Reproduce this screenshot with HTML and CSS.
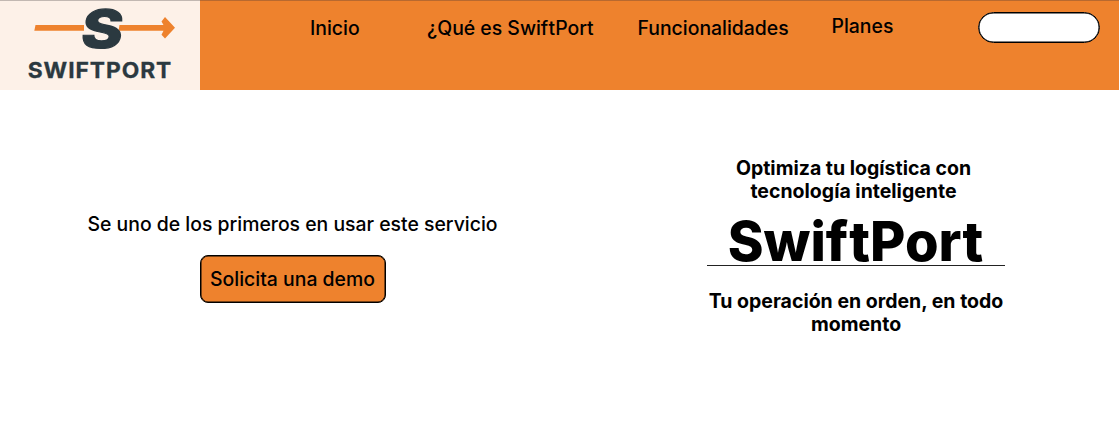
FILE: index.html
```html
<!DOCTYPE html>
<html lang="es">
<head>
<meta charset="utf-8">
<title>SwiftPort</title>
<link rel="stylesheet" href="styles.css">
</head>
<body>
<header class="header">
  <a class="logo">
    <svg width="200" height="90" viewBox="0 0 200 90">
      <path class="arrow" d="M35.500 25H84v5.800H34.300z"/>
      <path class="arrow" d="M119.500 25H163.500L161.500 21.500L165 17L175 27.700L165 38.500L161.500 34.700L163.500 30.800H118.500z"/>
      <text class="mark" transform="translate(79.500 47.500) skewX(-7) scale(1.190 1)">S</text>
      <text class="wordmark" transform="translate(27.700 78) scale(1.060 1)" textLength="135.500" lengthAdjust="spacing">SWIFTPORT</text>
    </svg>
  </a>
  <nav class="nav">
    <a class="link inicio">Inicio</a>
    <a class="link about">¿Qué es Swi<span class="loose">f</span>tPort</a>
    <a class="link features">Funcionalidades</a>
    <a class="link plans">Planes</a>
  </nav>
  <div class="search"></div>
</header>
<main class="main">
  <section class="demo">
    <p class="lead">Se uno de los primeros en usar este servicio</p>
    <button class="button">Solicita una demo</button>
  </section>
  <section class="hero">
    <p class="tagline">Optimiza tu logística con<br>tecnología inteligente</p>
    <h1 class="title">Swi<span class="loose">f</span>tPort</h1>
    <p class="slogan">Tu operación en orden, en todo<br>momento</p>
  </section>
</main>
</body>
</html>
```
FILE: styles.css
```css
* { box-sizing: border-box; }
body {
  margin: 0;
  background: #fff;
  color: #000;
  font: 400 19.5px/24px Inter, sans-serif;
}
p, h1 { margin: 0; white-space: nowrap; }
.loose { letter-spacing: .02em; }
.header {
  display: flex;
  align-items: flex-start;
  width: 1119px;
  height: 90px;
  background: #ee822d;
  box-shadow: inset 0 1px #b8692f;
}
.logo {
  width: 200px;
  height: 90px;
  background: #fdf1e8;
  border-top: 1px solid #c2b8b2;
}
.logo svg { display: block; margin-top: -1px; }
.arrow { fill: #ee822d; }
.mark {
  font: 800 53px/1 Inter, sans-serif;
  fill: #2b3940;
  stroke: #2b3940;
  stroke-width: 1.200px;
}
.wordmark { font: 700 21.500px Inter, sans-serif; fill: #2b3940; stroke: #2b3940; stroke-width: .3px; }
.nav { display: flex; width: 778px; padding-top: 16px; }
.link { white-space: nowrap; font-weight: 500; font-size: 19.400px; }
.inicio { width: 117px; margin-left: 110px; }
.about { width: 210.500px; }
.features { width: 194px; }
.plans { margin-top: -2px; }
.search {
  flex-shrink: 0;
  width: 122px;
  height: 31px;
  margin-top: 12px;
  background: #fff;
  border: 1px solid #000;
  border-radius: 16px;
  box-shadow: inset 0 0 0 .500px #000;
}
.main { display: flex; height: 338px; }
.demo {
  display: flex;
  flex-direction: column;
  align-items: center;
  width: 585px;
  padding-top: 122px;
}
.lead { font-weight: 500; font-size: 19.400px; }
.button {
  width: 186px;
  height: 48px;
  margin-top: 19px;
  padding: 0;
  color: #000;
  background: #ee822d;
  border: 1px solid #000;
  border-radius: 8px;
  box-shadow: inset 0 0 0 .500px #000;
  font: 500 19.400px Inter, sans-serif;
  white-space: nowrap;
}
.hero {
  width: 298px;
  margin-left: 122px;
  padding-top: 67px;
  text-align: center;
}
.tagline, .slogan { font-weight: 700; line-height: 23px; }
.tagline { margin-left: -5px; }
.title {
  height: 63px;
  border-bottom: 1px solid #222;
  font-size: 54.300px;
  font-weight: 800;
  line-height: 77px;
  text-indent: -1px;
}
.slogan { margin-top: 24px; }
```
